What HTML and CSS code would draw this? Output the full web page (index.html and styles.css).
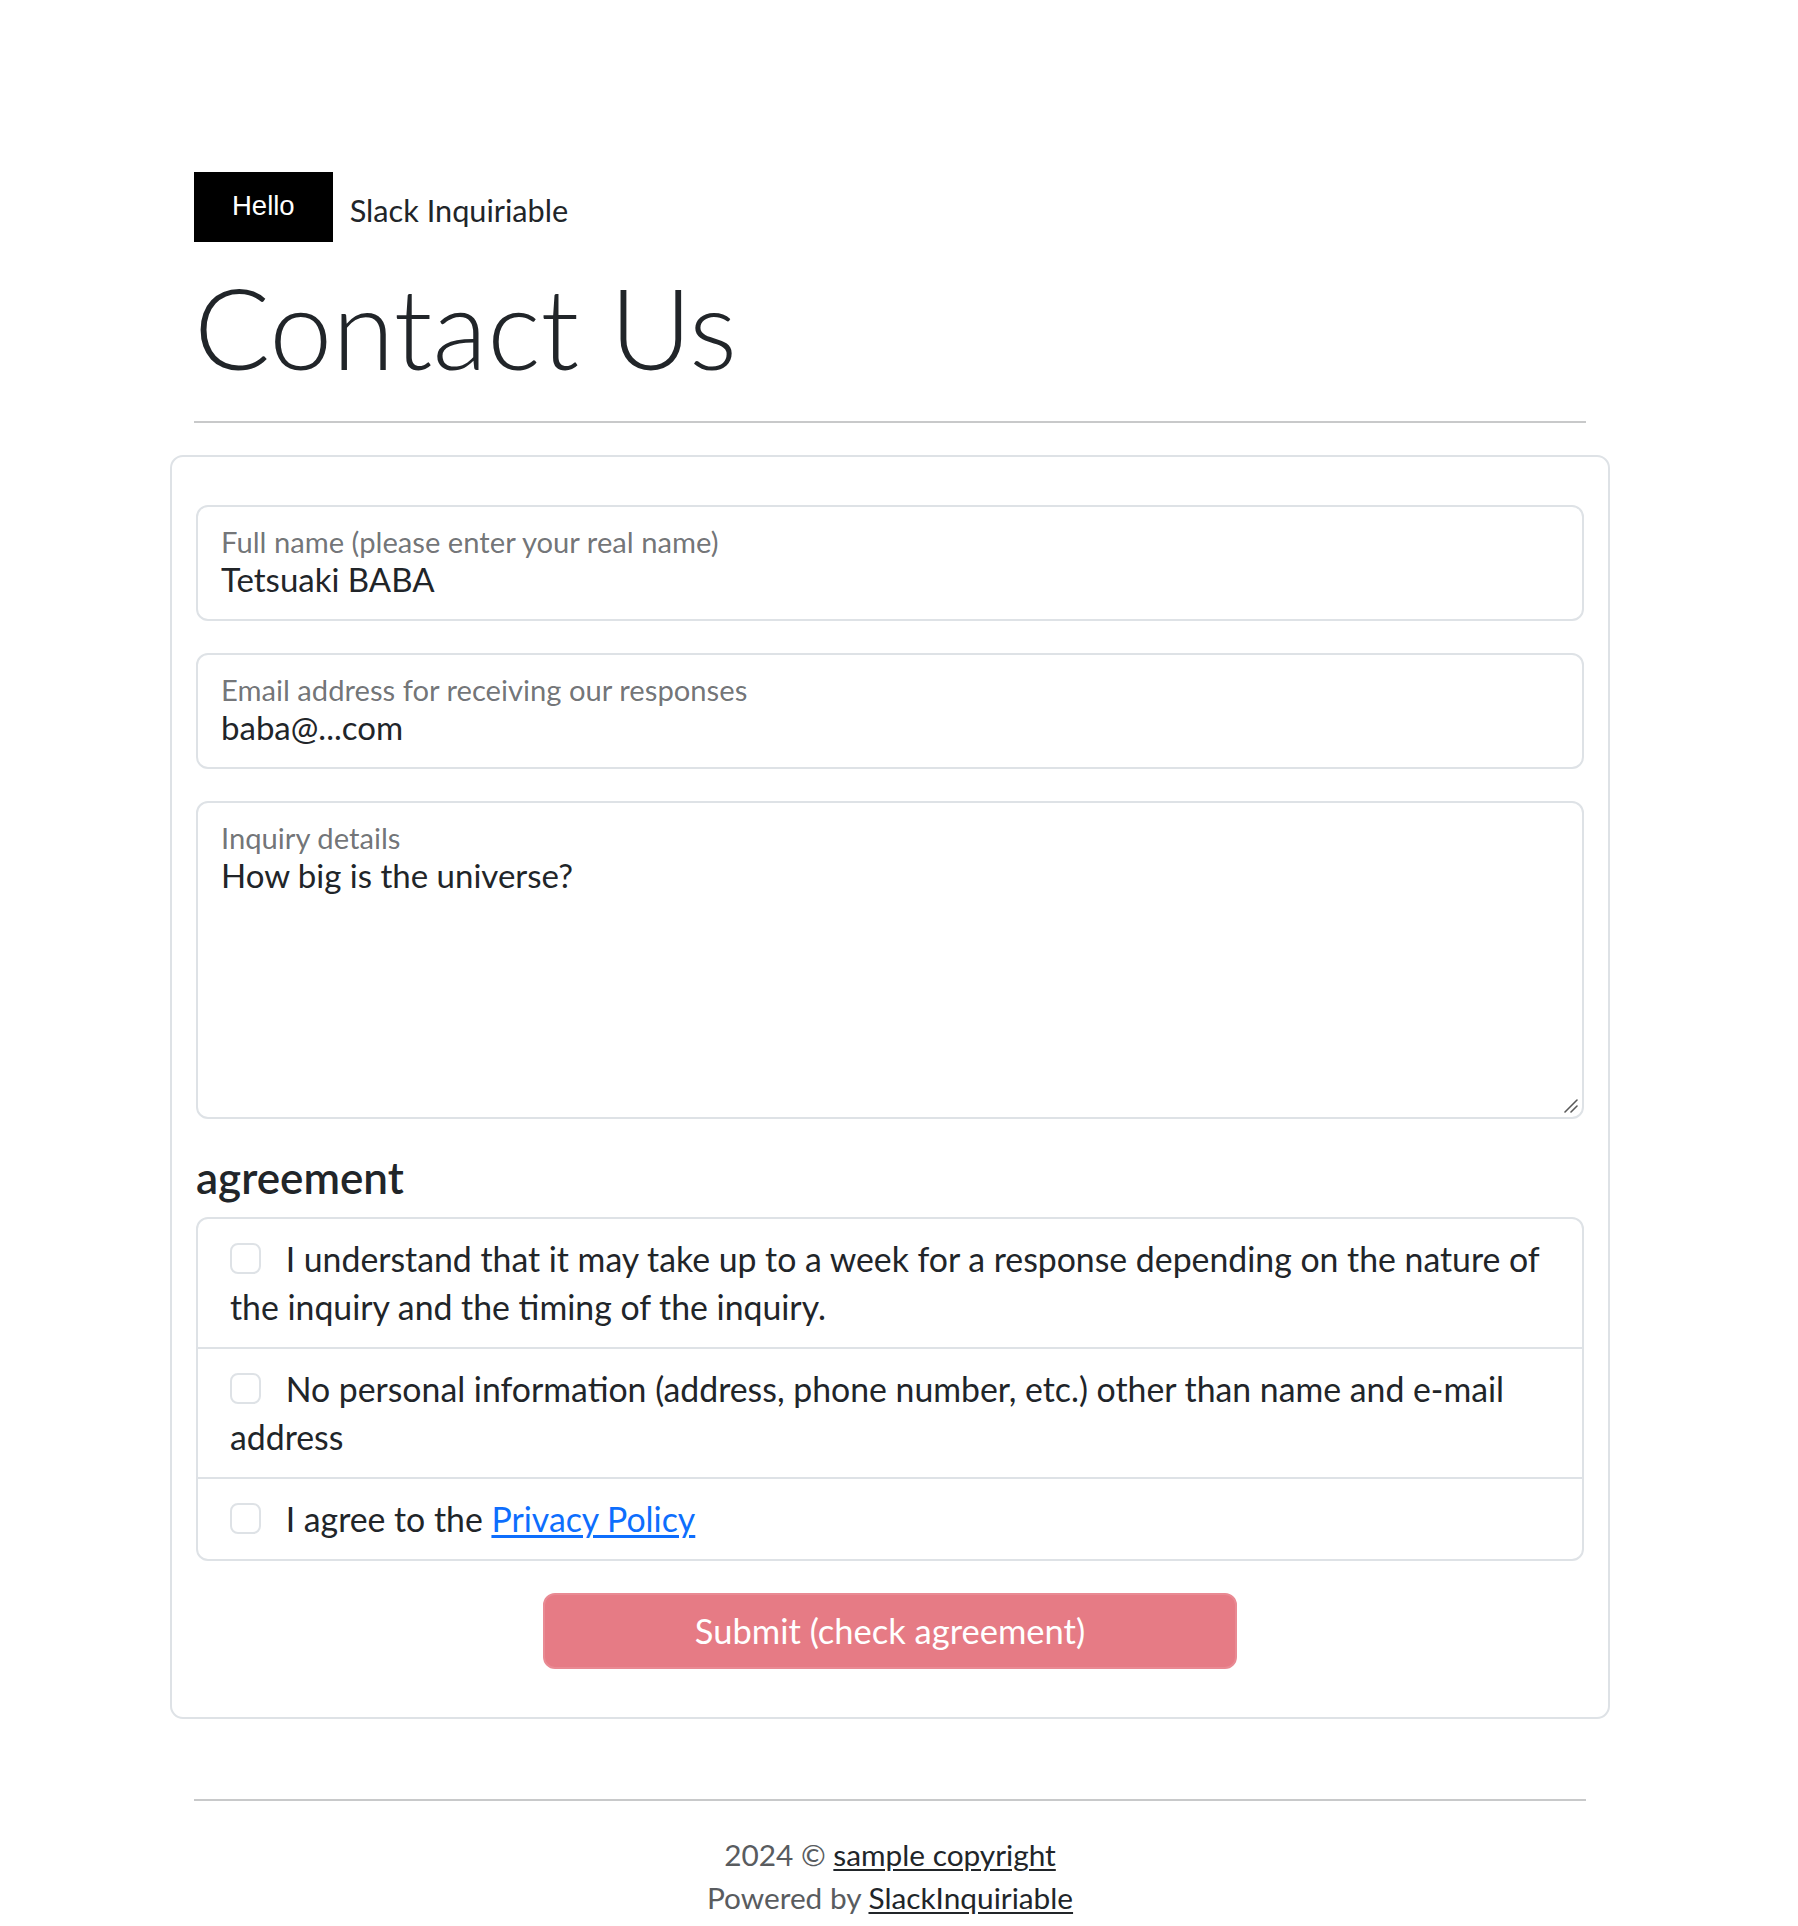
FILE: index.html
```html
<!DOCTYPE html>
<html lang="en">
<head>
<meta charset="utf-8">
<title>Contact Us</title>
<link rel="stylesheet" href="styles.css">
</head>
<body>
<div class="page">
  <header class="header">
    <nav class="nav">
      <span class="badge">Hello</span>
      <span class="brand">Slack Inquiriable</span>
    </nav>
    <h1 class="title">Contact Us</h1>
  </header>

  <main class="card">
    <div class="field">
      <label class="field-label" for="name">Full name (please enter your real name)</label>
      <input class="field-input" id="name" type="text" value="Tetsuaki BABA">
    </div>
    <div class="field">
      <label class="field-label" for="email">Email address for receiving our responses</label>
      <input class="field-input" id="email" type="text" value="baba@...com">
    </div>
    <div class="field field-area">
      <label class="field-label" for="details">Inquiry details</label>
      <textarea class="field-input field-textarea" id="details">How big is the universe?</textarea>
      <svg class="grip" width="14" height="14" viewBox="0 0 14 14" aria-hidden="true">
        <line x1="13" y1="1" x2="1" y2="13" stroke="#5a5a5a" stroke-width="1.6" stroke-linecap="round"/>
        <line x1="13" y1="7" x2="7" y2="13" stroke="#5a5a5a" stroke-width="1.6" stroke-linecap="round"/>
      </svg>
    </div>

    <h4 class="section-title">agreement</h4>
    <ul class="list">
      <li class="list-item"><input class="check" type="checkbox"> I understand that it may take up to a week for a response depending on the nature of the inquiry and the timing of the inquiry.</li>
      <li class="list-item"><input class="check" type="checkbox"> No personal information (address, phone number, etc.) other than name and e-mail address</li>
      <li class="list-item"><input class="check" type="checkbox"> I agree to the <a class="link" href="#">Privacy Policy</a></li>
    </ul>
    <button class="submit" type="button" disabled>Submit (check agreement)</button>
  </main>

  <footer class="footer">
    <div class="footer-line">2024 © <a class="footer-link" href="#">sample copyright</a></div>
    <div class="footer-line">Powered by <a class="footer-link" href="#">SlackInquiriable</a></div>
  </footer>
</div>
</body>
</html>
```

FILE: styles.css
```css
* { box-sizing: border-box; }

html, body { background: #fff; }

body {
  margin: 0;
  padding: 172px 18px 0 0;
  font-family: Lato, "Noto Sans", sans-serif;
  color: #212529;
}

.page {
  width: 1440px;
  margin: 0 auto;
}

.header {
  margin: 0 24px;
  border-bottom: 2px solid #c8c9ca;
  padding-bottom: 26px;
}

.nav {
  display: flex;
  align-items: center;
  height: 70px;
}

.badge {
  display: flex;
  align-items: center;
  height: 70px;
  padding: 0 38px 3px 38px;
  background: #000;
  color: #fff;
  font-family: "Liberation Sans", Arial, sans-serif;
  font-size: 27.5px;
}

.brand {
  margin-left: 17px;
  padding-top: 6px;
  font-size: 30.7px;
}

.title {
  margin: 17px 0 0 0;
  font-size: 113px;
  font-weight: 300;
  line-height: 1.2;
}

.card {
  margin-top: 32px;
  border: 2px solid #dee2e6;
  border-radius: 13px;
  padding: 48px 24px 48px 24px;
}

.field {
  display: flex;
  flex-direction: column;
  height: 116px;
  border: 2px solid #dee2e6;
  border-radius: 12px;
  margin-bottom: 32px;
  background: #fff;
}

.field-area {
  position: relative;
  height: 318px;
}

.field-label {
  padding: 18px 23px 0 23px;
  font-size: 29.2px;
  line-height: 34px;
  color: rgba(33, 37, 41, 0.65);
}

.field-input {
  border: 0;
  outline: 0;
  padding: 0 23px;
  height: 40px;
  font-family: Lato, "Noto Sans", sans-serif;
  font-size: 33px;
  line-height: 40px;
  color: #212529;
  background: transparent;
  border-radius: 0 0 10px 10px;
}

.field-textarea {
  flex: 1;
  resize: none;
  padding-top: 0;
  padding-bottom: 0;
}

.grip {
  position: absolute;
  right: 4px;
  bottom: 4px;
}

.section-title {
  margin: 0 0 14px 0;
  font-size: 44px;
  font-weight: 600;
  line-height: 1.2;
}

.list {
  list-style: none;
  margin: 0;
  padding: 0;
  border: 2px solid #dee2e6;
  border-radius: 12px;
}

.list-item {
  padding: 16px 32px;
  font-size: 33.8px;
  line-height: 48px;
}

.list-item + .list-item {
  border-top: 2px solid #dee2e6;
}

.check {
  appearance: none;
  -webkit-appearance: none;
  width: 31px;
  height: 31px;
  margin: 8px 16px 0 0;
  vertical-align: top;
  border: 2px solid #dee2e6;
  border-radius: 8px;
  background: #fff;
}

.link {
  color: #0d6efd;
  text-decoration: underline;
  text-underline-offset: 3px;
}

.submit {
  display: block;
  width: 50%;
  height: 76px;
  margin: 32px auto 0 auto;
  padding: 0 24px;
  border: 2px solid #e98a93;
  border-radius: 12px;
  background: #e67b85;
  color: #fff;
  font-family: Lato, "Noto Sans", sans-serif;
  font-size: 34.5px;
  line-height: 48px;
}

.footer {
  margin: 80px 24px 0 24px;
  border-top: 2px solid #c8c9ca;
  padding: 32px 0 10px 0;
  text-align: center;
  font-size: 29.8px;
  line-height: 43px;
  color: #595c5f;
}

.footer-link {
  color: #212529;
  text-decoration: underline;
  text-underline-offset: 3px;
}
```
